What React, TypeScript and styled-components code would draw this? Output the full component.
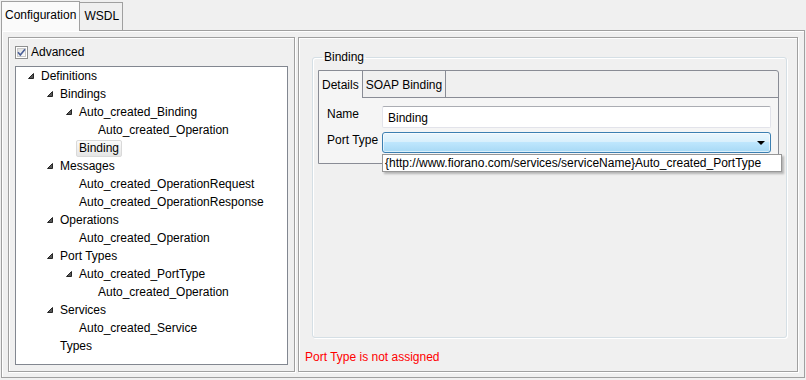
import React from "react";
import styled, { createGlobalStyle } from "styled-components";

const GlobalStyle = createGlobalStyle`
  html, body {
    margin: 0;
    padding: 0;
    background: #f0f0f0;
  }
  body {
    font-family: "Liberation Sans", Arial, sans-serif;
    font-size: 12px;
    color: #000;
  }
  * {
    box-sizing: border-box;
  }
`;

type TreeNode = {
  label: string;
  level: number;
  expanded?: boolean;
  selected?: boolean;
};

const treeData: TreeNode[] = [
  { label: "Definitions", level: 0, expanded: true },
  { label: "Bindings", level: 1, expanded: true },
  { label: "Auto_created_Binding", level: 2, expanded: true },
  { label: "Auto_created_Operation", level: 3 },
  { label: "Binding", level: 2, selected: true },
  { label: "Messages", level: 1, expanded: true },
  { label: "Auto_created_OperationRequest", level: 2 },
  { label: "Auto_created_OperationResponse", level: 2 },
  { label: "Operations", level: 1, expanded: true },
  { label: "Auto_created_Operation", level: 2 },
  { label: "Port Types", level: 1, expanded: true },
  { label: "Auto_created_PortType", level: 2, expanded: true },
  { label: "Auto_created_Operation", level: 3 },
  { label: "Services", level: 1, expanded: true },
  { label: "Auto_created_Service", level: 2 },
  { label: "Types", level: 1 },
];

// little windows-7 style "expanded" triangle
const Expander: React.FC = () => (
  <svg width="6" height="6" viewBox="0 0 6 6">
    <polygon points="5.5,0.5 5.5,5.5 0.5,5.5" fill="#595959" stroke="#262626" strokeWidth="1" strokeLinejoin="round" />
  </svg>
);

const CheckIcon: React.FC = () => (
  <svg width="13" height="13" viewBox="0 0 13 13">
    <defs>
      <linearGradient id="cbg" x1="0" y1="0" x2="1" y2="1">
        <stop offset="0" stopColor="#dcdcdc" />
        <stop offset="1" stopColor="#ffffff" />
      </linearGradient>
    </defs>
    <rect x="0.5" y="0.5" width="12" height="12" fill="#fff" stroke="#8e8f8f" />
    <rect x="2.5" y="2.5" width="8" height="8" fill="url(#cbg)" stroke="#c9c9c9" />
    <path d="M3 6.3 L5.3 9 L10 3.2" fill="none" stroke="#4a5f97" strokeWidth="1.6" />
  </svg>
);

const App: React.FC = () => {
  return (
    <>
      <GlobalStyle />
      <Frame>
        <TabRow>
          <OuterTab $active>Configuration</OuterTab>
          <OuterTab>WSDL</OuterTab>
        </TabRow>
        <FolderBody>
          <LeftPanel>
            <CheckRow>
              <CheckIcon />
              <span>Advanced</span>
            </CheckRow>
            <Tree>
              {treeData.map((node, i) => (
                <TreeRow key={i} $level={node.level}>
                  <ExpanderSlot>{node.expanded && <Expander />}</ExpanderSlot>
                  <TreeLabel $selected={node.selected}>{node.label}</TreeLabel>
                </TreeRow>
              ))}
            </Tree>
          </LeftPanel>

          <RightPanel>
            <Group>
              <GroupLegend>Binding</GroupLegend>
              <InnerFolder>
                <InnerTabRow>
                  <InnerTab $active>Details</InnerTab>
                  <InnerTab>SOAP Binding</InnerTab>
                  <InnerTabFill />
                </InnerTabRow>
                <InnerBody>
                  <FieldRow>
                    <FieldLabel>Name</FieldLabel>
                    <TextInput>Binding</TextInput>
                  </FieldRow>
                  <FieldRow>
                    <FieldLabel>Port Type</FieldLabel>
                    <ComboWrap>
                      <Combo>
                        <ComboArrow />
                      </Combo>
                      <DropList>
                        {"{http://www.fiorano.com/services/serviceName}Auto_created_PortType"}
                      </DropList>
                    </ComboWrap>
                  </FieldRow>
                </InnerBody>
              </InnerFolder>
            </Group>
            <ErrorText>Port Type is not assigned</ErrorText>
          </RightPanel>
        </FolderBody>
      </Frame>
    </>
  );
};

export default App;

const Frame = styled.div`
  width: 806px;
  height: 380px;
  padding: 1px 1px 2px 1px;
  display: flex;
  flex-direction: column;
`;

const TabRow = styled.div`
  display: flex;
  align-items: flex-end;
  height: 29px;
  position: relative;
  z-index: 1;
`;

const OuterTab = styled.div<{ $active?: boolean }>`
  height: ${(p) => (p.$active ? "30px" : "28px")};
  margin-bottom: ${(p) => (p.$active ? "-1px" : "0")};
  padding: ${(p) => (p.$active ? "6px 3px 0 3px" : "6px 3px 0 4px")};
  border: 1px solid #a0a0a0;
  border-bottom: none;
  border-left: ${(p) => (p.$active ? "1px solid #a0a0a0" : "none")};
  background: ${(p) => (p.$active ? "#fafafa" : "#f0f0f0")};
  line-height: 15px;
  white-space: nowrap;
`;

const FolderBody = styled.div`
  flex: 1;
  display: flex;
  gap: 3px;
  padding: 6px 6px 5px 6px;
  border: 1px solid #a0a0a0;
  background: #f0f0f0;
  box-shadow: inset 1px 1px 0 #ffffff;
`;

const Etched = styled.div`
  border: 1px solid #a0a0a0;
  box-shadow: inset 1px 1px 0 #ffffff, 1px 1px 0 #ffffff;
`;

const LeftPanel = styled(Etched)`
  width: 287px;
  display: flex;
  flex-direction: column;
  padding: 8px 6px 6px 6px;
`;

const CheckRow = styled.div`
  display: flex;
  align-items: center;
  gap: 3px;
  height: 13px;
  margin-bottom: 7px;
  line-height: 13px;

  svg {
    flex: none;
  }
`;

const Tree = styled.div`
  flex: 1;
  background: #fff;
  border: 1px solid #828790;
`;

const TreeRow = styled.div<{ $level: number }>`
  display: flex;
  align-items: center;
  height: 18px;
  padding-left: ${(p) => 9 + p.$level * 19}px;
`;

const ExpanderSlot = styled.span`
  width: 16px;
  flex: none;
  display: flex;
  align-items: center;
  padding-left: 3px;
`;

const TreeLabel = styled.span<{ $selected?: boolean }>`
  margin-left: -3px;
  padding: 0 2px;
  line-height: 15px;
  white-space: nowrap;
  border: 1px solid ${(p) => (p.$selected ? "#d9d9d9" : "transparent")};
  border-radius: 2px;
  background: ${(p) => (p.$selected ? "linear-gradient(#fafafa, #e5e5e5)" : "transparent")};
`;

const RightPanel = styled(Etched)`
  flex: 1;
  display: flex;
  flex-direction: column;
  padding: 12px 10px 7px 6px;
`;

const Group = styled.fieldset`
  flex: 1;
  margin: 0 0 0 7px;
  padding: 6px 7px 0 5px;
  border: 1px solid #d5dfe5;
  border-radius: 3px;
  box-shadow: inset 1px 1px 0 #ffffff, 1px 1px 0 #ffffff;
  min-width: 0;
`;

const GroupLegend = styled.legend`
  margin-left: 4px;
  padding: 0 2px;
  line-height: 14px;
`;

const InnerFolder = styled.div`
  border: 1px solid #898c95;
  border-radius: 0 3px 0 0;
`;

const InnerTabRow = styled.div`
  display: flex;
  height: 27px;
`;

const InnerTab = styled.div<{ $active?: boolean }>`
  padding: 7px 3px 0 3px;
  line-height: 15px;
  white-space: nowrap;
  border-right: 1px solid #898c95;
  border-bottom: ${(p) => (p.$active ? "none" : "1px solid #898c95")};
  background: ${(p) => (p.$active ? "#f5f5f5" : "#f0f0f0")};
`;

const InnerTabFill = styled.div`
  flex: 1;
  border-bottom: 1px solid #898c95;
`;

const InnerBody = styled.div`
  background: #f5f5f5;
  padding: 8px 7px 10px 8px;
  display: flex;
  flex-direction: column;
  gap: 4px;
`;

const FieldRow = styled.div`
  display: flex;
  align-items: flex-start;
`;

const FieldLabel = styled.div`
  width: 55px;
  flex: none;
  line-height: 17px;
  white-space: nowrap;
`;

const TextInput = styled.div`
  flex: 1;
  height: 22px;
  padding: 4px 5px 3px 5px;
  line-height: 14px;
  background: #fff;
  border: 1px solid #e2e3ea;
  border-top-color: #abadb3;
  border-radius: 2px;
`;

const ComboWrap = styled.div`
  flex: 1;
  position: relative;
`;

const Combo = styled.div`
  height: 21px;
  border: 1px solid #3c7fb1;
  border-radius: 3px;
  background: linear-gradient(#eaf6fd 0%, #d9f0fc 45%, #bee6fd 50%, #a7d9f5 100%);
  box-shadow: inset 0 0 0 1px rgba(255, 255, 255, 0.6);
  display: flex;
  align-items: center;
  justify-content: flex-end;
  padding-right: 5px;
`;

const ComboArrow = styled.span`
  width: 0;
  height: 0;
  border-left: 4px solid transparent;
  border-right: 4px solid transparent;
  border-top: 4px solid #000;
`;

const DropList = styled.div`
  position: absolute;
  top: 22px;
  left: 0;
  width: 400px;
  height: 18px;
  padding: 1px 2px;
  line-height: 15px;
  white-space: nowrap;
  background: #fff;
  border: 1px solid #979797;
  box-shadow: 2px 2px 2px rgba(0, 0, 0, 0.25);
  z-index: 2;
`;

const ErrorText = styled.div`
  margin-top: 12px;
  line-height: 14px;
  color: #ff0000;
  white-space: nowrap;
`;
